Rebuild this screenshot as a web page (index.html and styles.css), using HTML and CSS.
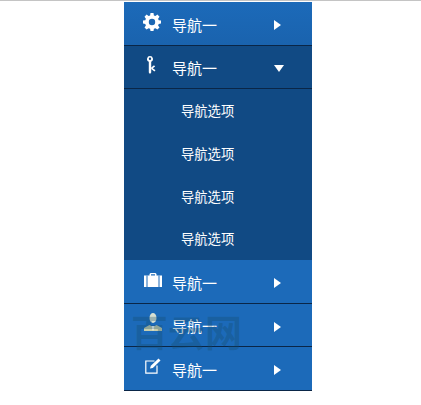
FILE: index.html
```html
<!DOCTYPE html>
<html lang="zh">
  <head>
    <meta charset="utf-8" />
    <title>导航</title>
    <link rel="stylesheet" href="styles.css">
  </head>
  <body>
    <div class="topline"></div>
    <ul class="nav">
      <li class="item first">
        <span class="icon gear">
          <svg width="18" height="18" viewBox="0 0 18 18"><path fill="#fff" fill-rule="evenodd" d="M7.500 0h3l.4 2.400 1.500.6 2-1.400 2.100 2.100-1.400 2 .6 1.500 2.300.4v3l-2.300.4-.6 1.500 1.400 2-2.100 2.100-2-1.400-1.500.6-.4 2.200h-3l-.4-2.200-1.500-.6-2 1.400-2.100-2.100 1.400-2-.6-1.500L0 10.600v-3l2.300-.4.6-1.500-1.400-2 2.100-2.100 2 1.400 1.500-.6zM9 5.800a3.200 3.200 0 1 0 0 6.400 3.200 3.200 0 0 0 0-6.400z"/></svg>
        </span>
        <span class="label">导航一</span>
        <span class="arrow right"></span>
      </li>
      <li class="item open">
        <span class="icon key">
          <svg width="9" height="18" viewBox="0 0 9 18"><path fill="#fff" fill-rule="evenodd" d="M3 0a3 3 0 0 1 1.200 5.750V16.500L3 18l-1.200-1.500V5.750A3 3 0 0 1 3 0zm0 1.500a1.200 1.200 0 1 0 0 2.400 1.200 1.200 0 0 0 0-2.400z"/><path fill="#fff" d="M4.200 11.500 7 9.300l1.100 1.100-2.300 1.900 2.700 2-1.100 1.200-3.200-2.500z"/></svg>
        </span>
        <span class="label">导航一</span>
        <span class="arrow down"></span>
      </li>
      <li class="sub">导航选项</li>
      <li class="sub">导航选项</li>
      <li class="sub">导航选项</li>
      <li class="sub">导航选项</li>
      <li class="item">
        <span class="icon case">
          <svg width="18" height="14" viewBox="0 0 18 14"><path fill="#fff" fill-rule="evenodd" d="M5.500 2.500V1L6.500 0h5l1 1v1.500H18V14H0V2.500zM7 1.300v1.200h4V1.300z"/><path fill="#1c6ab9" d="M2.500 2.500h1V14h-1zM14.500 2.500h1V14h-1z"/></svg>
        </span>
        <span class="label">导航一</span>
        <span class="arrow right"></span>
      </li>
      <li class="item">
        <span class="icon person">
          <svg width="18" height="18" viewBox="0 0 18 18"><ellipse cx="9" cy="5" rx="3.500" ry="5" fill="#d8e0d2"/><path fill="#c8cfae" d="M0 18v-3l5.500-3 3.500 2 3.500-2 5.500 3v3z"/><path fill="#fff" d="M7.500 13h3L9 18z"/></svg>
        </span>
        <span class="label">导航一</span>
        <span class="arrow right"></span>
      </li>
      <li class="item">
        <span class="icon edit">
          <svg width="17" height="16" viewBox="0 0 17 16"><path fill="none" stroke="#fff" stroke-width="1.200" d="M9.500 3H.8v12.200H12V7.500"/><path fill="#fff" d="M5 10.500l.8-2.700L13.500.5 15.500 2.500 7.800 10z"/></svg>
        </span>
        <span class="label">导航一</span>
        <span class="arrow right"></span>
      </li>
    </ul>
    <div class="watermark">百云网</div>
  </body>
</html>
```
FILE: styles.css
```css
html, body {
  margin: 0;
  padding: 0;
}
body {
  position: relative;
  width: 421px;
  height: 405px;
  overflow: hidden;
  background: #fff;
  font-family: "Noto Sans CJK SC", "Liberation Sans", sans-serif;
}
.topline {
  height: 1px;
  background: #c4c4c4;
  margin-bottom: 1px;
}
.nav {
  list-style: none;
  margin: 0 0 0 124px;
  padding: 0;
  width: 188px;
  color: #fff;
}
.item {
  display: flex;
  align-items: center;
  height: 42.5px;
  background: #1c6ab9;
  border-bottom: 1px solid #0a2647;
  font-size: 15px;
}
.item.first {
  background: linear-gradient(#1c6ab9, #1a63ae);
}
.item.open {
  background: #114a84;
}
.icon {
  display: flex;
  justify-content: center;
  width: 18px;
  margin-left: 19px;
}
.gear { margin-top: -3px; }
.key { margin-top: -4px; margin-left: 18px; }
.case { margin-top: -2px; margin-left: 20px; }
.person { margin-top: -6px; margin-left: 20px; }
.edit { margin-top: -5px; margin-left: 20px; }
.label {
  margin-top: 2px;
  margin-left: 10px;
  width: 102px;
}
.gear + .label { margin-left: 11px; }
.key + .label { margin-left: 12px; }
.arrow {
  width: 0;
  height: 0;
}
.arrow.right {
  margin-top: 4px;
  border-left: 7px solid #fff;
  border-top: 5px solid transparent;
  border-bottom: 5px solid transparent;
}
.arrow.down {
  margin-top: 3px;
  border-top: 7px solid #fff;
  border-left: 5px solid transparent;
  border-right: 5px solid transparent;
}
.sub {
  height: 42.75px;
  line-height: 44px;
  padding-left: 57px;
  background: #114a84;
  font-size: 13.3px;
}
.watermark {
  position: absolute;
  left: 131px;
  top: 311px;
  color: rgba(20, 75, 105, 0.32);
  font-size: 37px;
  font-weight: 700;
  line-height: 40px;
}
```
